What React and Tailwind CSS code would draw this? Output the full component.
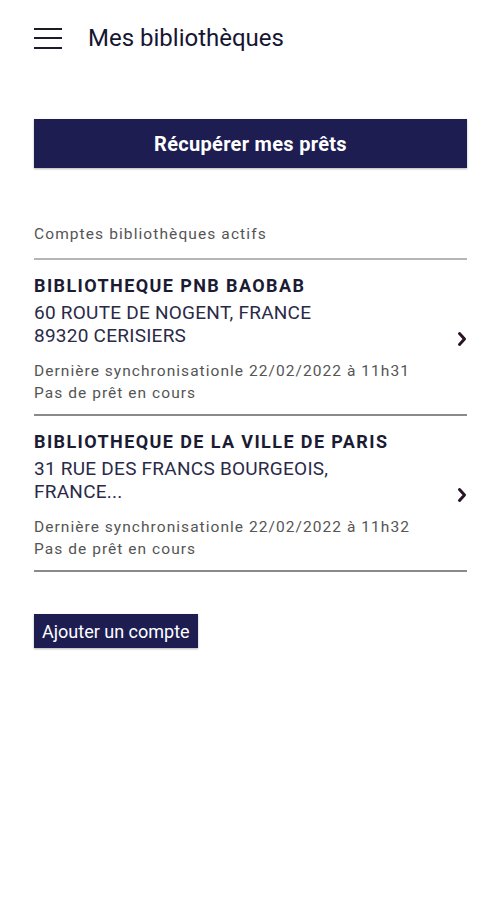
import React from "react";

const accounts = [
  {
    id: 1,
    name: "BIBLIOTHEQUE PNB BAOBAB",
    address: ["60 ROUTE DE NOGENT, FRANCE", "89320 CERISIERS"],
    sync: "Dernière synchronisationle 22/02/2022 à 11h31",
    loans: "Pas de prêt en cours",
  },
  {
    id: 2,
    name: "BIBLIOTHEQUE DE LA VILLE DE PARIS",
    address: ["31 RUE DES FRANCS BOURGEOIS,", "FRANCE..."],
    sync: "Dernière synchronisationle 22/02/2022 à 11h32",
    loans: "Pas de prêt en cours",
  },
];

const App = () => {
  return (
    <div className="min-h-[900px] w-[501px] bg-white font-['Roboto',sans-serif] text-[#1b1b3a]">
      {/* Header */}
      <div className="flex items-center h-[76px] px-[34px]">
        <button className="flex flex-col justify-between w-[28px] h-[21px]">
          <span className="block h-[2px] w-full bg-[#1b1b2a]" />
          <span className="block h-[2px] w-full bg-[#1b1b2a]" />
          <span className="block h-[2px] w-full bg-[#1b1b2a]" />
        </button>
        <h1 className="ml-[26px] text-[24px] text-[#161633]">Mes bibliothèques</h1>
      </div>

      <div className="px-[34px] pt-[43px]">
        <button className="w-full h-[49px] bg-[#1d1d52] text-white text-[20px] tracking-[0.3px] font-bold shadow-[0_1px_2px_rgba(0,0,0,0.3)]">
          Récupérer mes prêts
        </button>

        {/* Accounts */}
        <p className="mt-[55px] text-[15.5px] tracking-[1.1px] text-[#555] leading-[22px]">Comptes bibliothèques actifs</p>
        <div className="mt-[13px] h-[2px] bg-[#b5b5b5]" />

        {accounts.map((acc) => (
          <div key={acc.id}>
            <div className="flex items-center pt-[13px] pb-[10px]">
              <div className="flex-1">
                <p className="text-[18px] font-bold tracking-[1.4px] text-[#1b1b33] leading-[26px]">{acc.name}</p>
                <p className="mt-[2px] text-[19px] tracking-[0.25px] text-[#2a2a48] leading-[23px]">{acc.address[0]}</p>
                <p className="text-[19px] tracking-[0.25px] text-[#2a2a48] leading-[23px]">{acc.address[1]}</p>
                <p className="mt-[13px] text-[15.5px] tracking-[1.05px] text-[#555] leading-[22px]">{acc.sync}</p>
                <p className="text-[15.5px] tracking-[1.05px] text-[#555] leading-[22px]">{acc.loans}</p>
              </div>
              <svg width="10" height="16" viewBox="0 0 10 16">
                <path d="M2.5 2.5 L7.5 8 L2.5 13.5" fill="none" stroke="#2a1425" strokeWidth="3" strokeLinecap="round" strokeLinejoin="round" />
              </svg>
            </div>
            <div className="h-[2px] bg-[#8a8a8a]" />
          </div>
        ))}

        <button className="mt-[42px] h-[34px] px-[8px] bg-[#1d1d52] text-white text-[18px] shadow-[0_1px_2px_rgba(0,0,0,0.3)]">
          Ajouter un compte
        </button>
      </div>
    </div>
  );
};

export default App;
